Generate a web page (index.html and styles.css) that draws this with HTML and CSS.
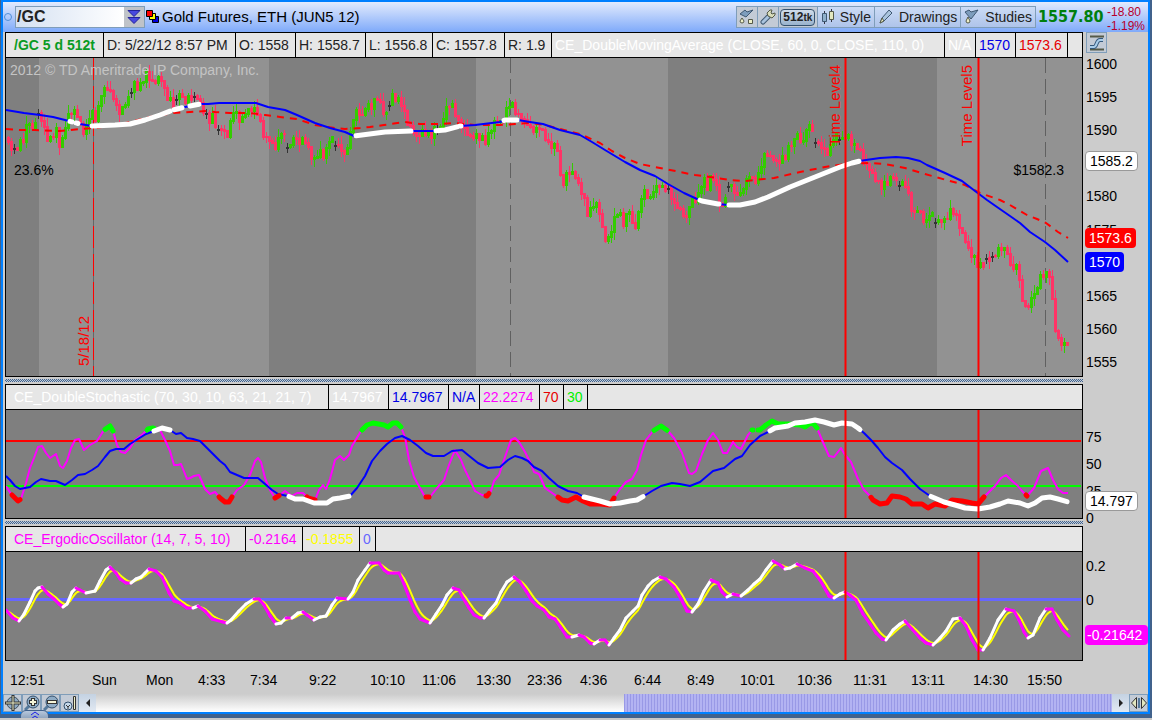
FILE: index.html
```
<!DOCTYPE html>
<html lang="en">
<head>
  <meta charset="UTF-8">
  <title>/GC Gold Futures</title>
  <meta name="viewport" content="width=device-width, initial-scale=1">
  <link rel="stylesheet" href="styles.css">
</head>
<body>
  <div class="frame">
    <div class="window">
      <header class="titlebar">
        <span class="link-dot"></span>
        <div class="symbol">
          <input type="text" value="/GC" aria-label="Symbol">
          <button aria-label="Symbol list">
            <svg width="14" height="16" viewBox="0 0 14 16"><path d="M1 1.500h12L7 7.500zM1 8.500h12l-6 6z" fill="#4848e0" stroke="#23239a" stroke-width="1"/></svg>
          </button>
        </div>
        <svg class="squares" width="14" height="14" viewBox="0 0 14 14" stroke="#000"><path d="M6.500 6.500h6v6h-6z" fill="#0000e0"/><path d="M3.500 3.500h6v6h-6z" fill="#ff0"/><path d="M.5.5h6v6h-6z" fill="#f00"/></svg>
        <h1>Gold Futures, ETH (JUN5 12)</h1>
        <div class="tools">
          <button class="square" aria-label="Flask">
            <svg width="16" height="16" viewBox="0 0 16 16"><path d="M1 5l5-4 2 2 6-2-7 7z" fill="#7d9dbd" stroke="#3f5872"/><path d="M3 9l2 3a2 2 0 1 1-4 0z" fill="#eef0c8" stroke="#555a48"/><path d="M9.500 10.500h4v4h-4z" fill="#eef0c8" stroke="#555a48"/></svg>
          </button>
          <button class="square" aria-label="Settings">
            <svg width="16" height="16" viewBox="0 0 16 16"><path d="M3 13l5-5" stroke="#3f5872" stroke-width="5" stroke-linecap="round"/><path d="M3 13l5-5" stroke="#a9c3dd" stroke-width="3" stroke-linecap="round"/><path d="M8 7L7 4l3-3 2 0-1 3 1 1 3-1v2l-3 3z" fill="#d8dcba" stroke="#555a48"/></svg>
          </button>
          <button class="tick"><span>512<small>tk</small></span></button>
          <button>
            <svg width="14" height="16" viewBox="0 0 14 16"><path d="M3.500 2v13M10.500 0v13" stroke="#334"/><path d="M1.500 4.500h4v8h-4z" fill="#8fb0cc" stroke="#3f5872"/><path d="M8.500 2.500h4v8h-4z" fill="#e3e8c0" stroke="#555a48"/></svg>
            Style
          </button>
          <button>
            <svg width="16" height="16" viewBox="0 0 16 16"><path d="M2 14l2-5 7-8 3 3-8 8z" fill="#a9c3dd" stroke="#3f5872"/><path d="M2 14l2-5 2 3z" fill="#eef0c8" stroke="#555a48"/></svg>
            Drawings
          </button>
          <button>
            <svg width="16" height="16" viewBox="0 0 16 16"><path d="M1 3l4-2 2 2 7-2-7 9z" fill="#7d9dbd" stroke="#3f5872"/><path d="M4 8l2 4a2 2 0 1 1-4 0z" fill="#eef0c8" stroke="#555a48"/></svg>
            Studies
          </button>
        </div>
        <strong class="last">1557.80</strong>
        <div class="change"><span>-18.80</span><span>-1.19%</span></div>
      </header>

      <main>
        <section class="panel">
          <div class="chart">
            <div class="legend price-legend">
              <b class="green">/GC 5 d 512t</b>
              <span>D: 5/22/12 8:57 PM</span>
              <span>O: 1558</span>
              <span>H: 1558.7</span>
              <span>L: 1556.8</span>
              <span>C: 1557.8</span>
              <span>R: 1.9</span>
              <span class="white">CE_DoubleMovingAverage (CLOSE, 60, 0, CLOSE, 110, 0)</span>
              <span class="white">N/A</span>
              <span class="blue">1570</span>
              <span class="red">1573.6</span>
            </div>
            <div class="plot price-plot">
              <svg id="price" viewBox="6 58 1076 318" preserveAspectRatio="none"></svg>
              <span class="note watermark">2012 © TD Ameritrade IP Company, Inc.</span>
              <span class="note fib">23.6%</span>
              <span class="note fib-price">$1582.3</span>
              <span class="note upright day">5/18/12</span>
              <span class="note upright level4">Time Level4</span>
              <span class="note upright level5">Time Level5</span>
            </div>
          </div>
          <aside class="axis price-axis">
            <button class="square scale" aria-label="Price axis settings">
              <svg width="16" height="16" viewBox="0 0 16 16"><path d="M1 1.500h14M1 14.500h14" stroke="#555a48" stroke-width="2"/><path d="M1 12h4c3 0 2-7 6-7h3" fill="none" stroke="#35597c" stroke-width="4"/><path d="M1 12h4c3 0 2-7 6-7h3" fill="none" stroke="#a9cdea" stroke-width="2"/></svg>
            </button>
            <ul>
              <li>1600</li><li>1595</li><li>1590</li><li></li><li>1580</li>
              <li>1575</li><li></li><li>1565</li><li>1560</li><li>1555</li>
            </ul>
            <span class="badge cursor">1585.2</span>
            <span class="badge slow">1573.6</span>
            <span class="badge fast">1570</span>
          </aside>
        </section>

        <div class="splitter"></div>

        <section class="panel">
          <div class="chart">
            <div class="legend stoch-legend">
              <span class="white">CE_DoubleStochastic (70, 30, 10, 63, 21, 21, 7)</span>
              <span class="white">14.7967</span>
              <span class="blue">14.7967</span>
              <span class="blue">N/A</span>
              <span class="magenta">22.2274</span>
              <span class="red">70</span>
              <span class="lime">30</span>
            </div>
            <div class="plot">
              <svg id="stochastic" viewBox="6 410 1076 108" preserveAspectRatio="none"></svg>
            </div>
          </div>
          <aside class="axis stoch-axis">
            <ul><li>75</li><li>50</li><li>25</li><li>0</li></ul>
            <span class="badge stoch">14.797</span>
          </aside>
        </section>

        <div class="splitter"></div>

        <section class="panel">
          <div class="chart">
            <div class="legend ergodic-legend">
              <span class="magenta">CE_ErgodicOscillator (14, 7, 5, 10)</span>
              <span class="magenta">-0.2164</span>
              <span class="yellow">-0.1855</span>
              <span class="violet">0</span>
            </div>
            <div class="plot">
              <svg id="ergodic" viewBox="6 552 1076 108" preserveAspectRatio="none"></svg>
            </div>
          </div>
          <aside class="axis ergodic-axis">
            <ul><li>0.2</li><li>0</li></ul>
            <span class="badge erg">-0.21642</span>
          </aside>
        </section>

        <div class="times">
          <span>12:51</span><span>Sun</span><span>Mon</span><span>4:33</span><span>7:34</span>
          <span>9:22</span><span>10:10</span><span>11:06</span><span>13:30</span><span>23:36</span>
          <span>4:36</span><span>6:44</span><span>8:49</span><span>10:01</span><span>10:36</span>
          <span>11:31</span><span>13:11</span><span>14:30</span><span>15:50</span>
        </div>
      </main>

      <footer>
        <button class="square" aria-label="Pan">
          <svg width="16" height="16" viewBox="0 0 16 16"><circle cx="8" cy="8" r="6" fill="#8eabc5" stroke="#3f4c55"/><path d="M8 0v16M0 8h16" stroke="#333" stroke-width="3"/><path d="M8 1v14M1 8h14" stroke="#eef0c8" stroke-width="1"/></svg>
        </button>
        <button class="square" aria-label="Zoom in">
          <svg width="16" height="16" viewBox="0 0 16 16"><path d="M1 15l4-4" stroke="#557a9c" stroke-width="3"/><circle cx="9" cy="7" r="6" fill="#8eabc5" stroke="#33506c"/><path d="M9 3v8M5 7h8" stroke="#333" stroke-width="4"/><path d="M9 4v6M6 7h6" stroke="#f5f5d8" stroke-width="2"/></svg>
        </button>
        <button class="square" aria-label="Zoom out">
          <svg width="16" height="16" viewBox="0 0 16 16"><path d="M1 15l4-4" stroke="#557a9c" stroke-width="3"/><circle cx="9" cy="7" r="6" fill="#8eabc5" stroke="#33506c"/><path d="M4 7h10" stroke="#333" stroke-width="4"/><path d="M5 7h8" stroke="#f5f5d8" stroke-width="2"/></svg>
        </button>
        <button class="square" aria-label="Right expansion">
          <svg width="16" height="16" viewBox="0 0 16 16"><circle cx="6" cy="11" r="4" fill="#c4d8ea" stroke="#33506c"/><path d="M4 10l2 2 2-2M6 12v2" stroke="#333" fill="none"/><path d="M11.500 1.500h2v13h-2z" fill="#eef0c8" stroke="#333"/></svg>
        </button>
        <button class="arrow" aria-label="Scroll left"><svg width="4" height="8" viewBox="0 0 4 8"><path d="M4 0v8L0 4z" fill="#222"/></svg></button>
        <div class="track"><div class="thumb"></div></div>
        <button class="arrow" aria-label="Scroll right"><svg width="4" height="8" viewBox="0 0 4 8"><path d="M0 0v8l4-4z" fill="#222"/></svg></button>
        <button class="square" aria-label="Fit">
          <svg width="16" height="16" viewBox="0 0 16 16"><path d="M5.500 2.500v11L.5 8zM10.500 2.500v11l5-5.500z" fill="#e3e8c0" stroke="#333"/><path d="M8 3v10" stroke="#557a9c" stroke-width="2"/></svg>
        </button>
      </footer>
    </div>
    <button class="drawer" aria-label="Open drawer">
      <svg width="10" height="8" viewBox="0 0 10 8"><path d="M1 4l4-3 4 3M1 8l4-3 4 3" fill="none" stroke="#1c1ce8" stroke-width="1"/></svg>
    </button>
  </div>
  <script src="chart.js"></script>
</body>
</html>
```
FILE: styles.css
```
:root {
  --frame-blue: #0080ff;
  --frame-dark: #41628c;
  --face: #cccccc;
  --legend: #e6e6e6;
  --plot: #7f7f7f;
  --button-edge: #7f9db9;
}

* { box-sizing: border-box; }

body {
  margin: 0;
  background: #c8c8c8;
  color: #000;
  font: 14px/16px "Liberation Sans", Arial, sans-serif;
}

.frame {
  position: relative;
  background: var(--frame-dark);
  padding: 0 2px 4px 1px;
}

.window {
  border: 2px solid var(--frame-blue);
  background: var(--face);
}

button {
  font: inherit;
  padding: 0;
  margin: 0;
  cursor: pointer;
}

svg { display: block; flex: none; }

/* title bar */
.titlebar {
  display: flex;
  align-items: center;
  height: 30px;
  background: linear-gradient(#e3ebfd, #7faafa);
}

.link-dot {
  width: 8px;
  height: 8px;
  margin: 0 3px 0 1px;
  border: 1px solid #4f8fd8;
  border-radius: 50%;
}

.symbol {
  display: flex;
  width: 130px;
  height: 22px;
  border: 1px solid var(--button-edge);
}

.symbol input {
  flex: 1;
  min-width: 0;
  border: 0;
  padding: 0 1px;
  background: linear-gradient(90deg, #d5e1f2, #fff);
  color: #222;
  font: bold 16px/20px "Liberation Sans", Arial, sans-serif;
}

.symbol button {
  display: flex;
  align-items: center;
  justify-content: center;
  width: 20px;
  border: 0;
  background: #bfc3c8;
}

.squares { margin: 0 2px 0 1px; }

h1 {
  margin: 0;
  flex: 1;
  font-size: 15px;
  font-weight: normal;
  white-space: nowrap;
}

.tools { display: flex; }

.tools button,
.square {
  display: flex;
  align-items: center;
  justify-content: center;
  height: 22px;
  border: 1px solid var(--button-edge);
  background: #c3cbd6;
  color: #222;
}

.tools button {
  gap: 5px;
  padding: 0 3px;
  margin-left: -1px;
  background: linear-gradient(#cbdbf5, #afc4ea);
}

.tools .square { width: 22px; background: #c3cbd6; }

.tools .tick { width: 40px; background: #c3cbd6; }

.tick span {
  border: 1px solid #36526e;
  border-radius: 4px;
  padding: 0 2px;
  background: linear-gradient(#cfdcea, #9ab3cd);
  font: bold 12px/14px "Liberation Sans", Arial, sans-serif;
}

.tick small { font-size: 10px; }

.last {
  width: 69px;
  padding-left: 2px;
  color: #007f0e;
  font: bold 16px/20px "DejaVu Sans Condensed", "Open Sans", sans-serif;
}

.change {
  display: flex;
  flex-direction: column;
  width: 43px;
  padding: 3px 0 0 2px;
  color: #b8002c;
  font-size: 12px;
  line-height: 14px;
}

/* panels */
main { padding-left: 2px; }

.panel {
  display: grid;
  grid-template-columns: 1fr 65px;
}

.chart {
  min-width: 0;
  border: 1px solid #000;
}

.legend {
  display: grid;
  height: 25px;
  border-bottom: 1px solid #000;
  background: var(--legend);
  color: #222;
  line-height: 24px;
  white-space: nowrap;
}

.legend > * {
  padding-left: 3px;
  border-right: 1px solid #000;
  overflow: hidden;
}

.legend > :first-child { padding-left: 8px; }

.price-legend { grid-template-columns: 98px 132px 60px 70px 67px 72px 47px 393px 31px 40px 52px; }
.stoch-legend { grid-template-columns: 323px 60px 60px 31px 60px 24px 24px; }
.ergodic-legend { grid-template-columns: 240px 57px 57px 16px; }

.legend .green { color: #0a9b24; }
.legend .white { color: #fff; }
.legend .blue { color: #0000e6; }
.legend .red { color: #e60000; }
.legend .magenta { color: #f0f; }
.legend .lime { color: #00f000; }
.legend .yellow { color: #ff0; }
.legend .violet { color: #66f; }

.plot {
  position: relative;
  height: 108px;
  background: var(--plot);
}

.price-plot { height: 318px; }

.plot svg {
  width: 100%;
  height: 100%;
}

.splitter {
  height: 7px;
  margin-right: 65px;
  border: solid var(--face);
  border-width: 2px 0;
  background: repeating-conic-gradient(#41628c 0 25%, #c0cbd8 0 50%) 0 0 / 2px 2px;
}

/* text drawn over the price plot */
.note {
  position: absolute;
  white-space: nowrap;
}

.watermark { left: 4px; top: 4px; color: #c4c4c4; }
.fib { left: 8px; top: 104px; }
.fib-price { right: 18px; top: 104px; }

.upright {
  writing-mode: vertical-rl;
  transform: rotate(180deg);
  color: #f00;
  font-size: 15px;
}

.day { left: 6.5%; bottom: 10px; }
.level4 { left: 76.3%; top: 7px; }
.level5 { left: 88.6%; top: 7px; }

/* value axes */
.axis {
  position: relative;
  padding-left: 3px;
}

.axis ul {
  display: flex;
  flex-direction: column;
  justify-content: space-between;
  margin: 0;
  padding: 0;
  list-style: none;
}

.axis li { height: 16px; }

.price-axis ul { height: 314px; margin-top: 3px; }
.stoch-axis ul { height: 97px; margin-top: 45px; }
.ergodic-axis ul { height: 50px; margin-top: 32px; }
.stoch-axis, .ergodic-axis { height: 135px; }

.scale { width: 21px; height: 21px; }

.badge {
  position: absolute;
  left: 2px;
  padding: 0 4px;
  border-radius: 4px;
  color: #fff;
  line-height: 20px;
}

.cursor, .stoch {
  background: #fff;
  color: #000;
  border: 1px solid #999;
  line-height: 18px;
}

.cursor { top: 119px; }
.slow { top: 196px; background: #f00; }
.fast { top: 220px; background: #00f; }
.stoch { top: 107px; }
.erg { top: 99px; right: 0; padding: 0 2px; background: #f0f; }

/* time axis */
.times {
  display: grid;
  grid-template-columns: 82fr 54fr 52fr 52fr 59fr 61fr 52fr 54fr 51fr 53fr 54fr 53fr 53fr 57fr 56fr 58fr 62fr 54fr 55fr;
  height: 33px;
  padding-left: 5px;
  margin-right: 66px;
  line-height: 38px;
}

/* scroll bar */
footer {
  display: flex;
  height: 18px;
}

footer .square { width: 19px; height: 18px; }

.arrow {
  display: flex;
  align-items: center;
  justify-content: center;
  width: 17px;
  border: 0;
  background: linear-gradient(#c4d2e2, #e2e9f2);
}

.track {
  flex: 1;
  display: flex;
  justify-content: flex-end;
  background: linear-gradient(#ccc, #fff);
}

.thumb {
  width: 48%;
  background: repeating-linear-gradient(90deg, #9999e6 0 1px, #b3b3f2 1px 3px);
}

.drawer {
  position: absolute;
  left: 20px;
  bottom: -2px;
  display: flex;
  align-items: center;
  justify-content: center;
  width: 29px;
  height: 10px;
  border: 1px solid #41628c;
  border-radius: 6px 6px 0 0;
  background: linear-gradient(#b8c8dc, #8aa0ba);
}
```
FILE: chart.js
```
const BLUE = "#0000ff", RED = "#ff0000", GREEN = "#00ff00", MAGENTA = "#ff00ff";

// "x,y x,y ..." -> [[x, y], ...]
const parse = (s) => s.trim().split(/\s+/).map((p) => p.split(",").map(Number));

const close = parse(`7,140 10,145 13,152 17,153 20,145 23,138 26,124 29,122 32,128 37,115 41,124 46,138 49,135 52,137
  56,128 60,149 64,135 68,119 71,110 75,109 80,124 84,133 88,126 91,113 94,121 98,105 102,90 106,85 109,92 112,100
  117,112 121,107 126,102 130,92 133,84 138,95 143,78 146,71 151,82 156,79 162,85 165,97 169,94 173,106 177,96
  180,88 183,108 187,103 191,96 195,94 198,98 202,107 208,122 210,130 213,114 216,128 220,127 227,134 233,116
  240,118 245,112 250,107 256,115 262,132 268,138 275,146 282,136 289,146 293,136 297,140 303,142 309,154
  315,158 320,150 324,157 330,143 336,140 344,154 350,136 354,119 358,110 362,114 367,103 371,106 376,101
  380,107 386,112 392,94 398,102 405,118 412,128 415,137 420,132 425,138 430,136 434,126 440,127 444,112
  448,110 454,109 460,124 466,130 471,142 478,138 481,132 485,142 489,130 495,124 500,126 506,107 512,103
  518,118 524,125 528,120 532,131 536,128 540,125 543,138 547,148 551,144 556,142 559,163 561,187 564,180
  567,175 571,178 576,173 580,190 585,200 587,213 594,210 597,207 600,212 604,240 609,236 613,222
  617,218 619,215 622,225 627,210 630,210 633,230 637,220 641,202 645,192 650,196 654,188 659,184 664,194
  670,192 674,202 679,208 683,213 686,221 689,210 694,200 699,190 704,178 707,187 711,178 716,190 721,207
  724,200 727,188 732,180 734,197 740,198 744,181 748,174 753,179 757,180 762,167 766,151 771,156 776,161
  781,160 786,162 789,145 794,138 797,132 800,142 805,136 809,128 812,136 816,138 820,145 825,150 828,153
  833,143 838,135 843,137 848,135 853,147 858,153 864,160 870,170 875,178 881,192 886,183 891,174 896,180
  900,183 905,190 909,201 913,213 916,208 921,213 925,225 930,218 935,218 940,220 945,219 949,212 954,218
  959,224 963,235 968,248 974,260 976,270 980,268 986,257 990,260 993,254 997,251 1003,254 1007,250
  1011,269 1016,265 1019,277 1022,305 1028,312 1031,294 1036,292 1039,275 1044,274 1049,280 1051,305
  1053,302 1055,327 1058,337 1062,345 1065,342 1069,342`);

const fastMA = parse(`6,110 24,113 40,115 53,117 65,120 80,124 92,126 115,125 130,124 145,120 160,115 173,110 185,107
  200,104 208,104 219,103 256,103 268,107 285,110 297,115 315,123 330,128 345,132 354,136 385,132 411,131 434,131
  445,130 460,126 475,125 500,122 505,120 518,120 530,122 543,124 560,130 580,135 592,142 605,150 625,162 640,170
  655,176 668,184 684,193 697,199 702,201 718,204 728,205 740,205 755,202 768,197 790,187 815,177 840,167 852,163
  860,161 866,160 880,158 896,157 908,158 920,161 927,165 945,173 962,181 975,191 987,200 997,207 1010,216
  1020,223 1030,232 1045,242 1055,250 1068,262`);

const slowMA = parse(`6,129 20,130 35,130 60,131 80,129 95,128 110,126 130,122 150,117 173,113 190,112 205,111 215,112
  230,113 250,113 265,115 280,117 297,119 315,125 335,128 345,129 360,128 370,127 384,125 405,122 420,124 440,124
  455,123 475,125 500,125 515,124 530,123 545,125 560,129 580,134 600,143 612,151 625,158 640,164 660,168 680,172
  695,175 710,177 730,180 745,181 755,180 774,178 800,172 825,167 845,164 870,163 885,164 905,168 925,174 950,181
  965,185 980,193 1000,200 1010,205 1027,215 1037,219 1046,223 1058,232 1068,238`);

const fastK = parse(`6,486 11,494 18,501 21,499 26,483 30,468 34,458 38,447 42,446 46,453 50,458 56,454 60,466 63,468
  67,461 71,448 75,440 79,439 84,450 90,445 97,441 104,430 110,426 113,431 117,445 121,452 125,453 130,448
  135,440 143,434 148,429 153,428 160,430 165,440 170,451 174,465 178,465 181,464 187,479 190,478 194,476 199,475
  205,489 210,494 215,492 220,498 225,502 229,502 232,497 237,490 244,485 250,475 255,461 258,458 261,462 265,478
  270,490 275,498 280,495 285,491 292,496 297,493 303,493 308,498 315,500 319,490 323,485 326,489 330,479 335,460
  340,456 344,460 349,455 352,446 358,436 361,431 367,425 373,423 384,425 388,427 393,423 397,423 401,427 405,437
  409,460 414,477 420,488 425,497 430,497 437,488 444,480 449,465 455,450 461,460 465,470 470,480 475,491 482,495
  487,496 491,491 494,481 499,475 505,457 511,440 515,438 519,442 525,452 531,464 534,472 539,474 545,488 555,495
  562,500 568,501 576,497 583,501 590,504 600,504 610,505 614,498 620,489 626,482 632,479 637,470 641,455 646,440
  653,431 661,426 668,431 674,438 682,453 689,473 692,474 696,471 702,454 708,440 713,433 718,440 723,453 727,453
  733,442 737,447 741,449 748,435 752,430 760,430 766,425 772,421 778,424 788,424 800,425 805,427 812,422 817,428
  822,440 829,456 834,457 841,448 845,455 851,462 858,479 864,490 870,496 873,500 880,504 887,503 892,496 900,497
  906,499 912,504 922,504 928,508 935,504 945,506 952,500 962,501 972,503 978,504 984,497 990,491 995,486 1001,478
  1006,475 1011,480 1018,486 1022,491 1027,496 1034,488 1041,471 1048,468 1053,480 1058,489 1063,493 1068,493`);

const slowD = parse(`6,476 10,480 15,486 20,489 30,487 36,482 41,479 50,481 56,481 65,485 72,480 78,475 85,474 92,470
  98,466 105,457 110,451 116,449 124,449 130,444 138,439 146,434 154,431 162,428 170,430 176,434 181,433 187,438
  193,439 200,441 205,446 213,454 220,461 225,465 230,472 237,475 244,478 258,478 265,484 272,490 278,494 288,496
  295,499 303,499 314,503 327,503 333,499 340,498 350,496 357,488 365,476 372,461 380,451 387,444 395,438 402,436
  410,440 418,446 426,453 433,456 444,456 452,451 462,450 468,455 478,463 488,468 500,467 508,460 515,456 522,458
  528,461 534,467 542,471 549,478 558,486 568,491 577,493 584,497 592,499 600,501 610,504 620,503 630,501 637,500
  644,496 652,491 661,486 672,483 680,484 690,486 700,482 713,471 724,468 735,459 742,456 750,445 760,436 768,432
  775,428 788,426 795,423 805,422 815,420 824,422 834,425 842,423 852,424 858,428 864,433 871,440 878,448 885,457
  892,463 902,470 910,479 920,489 930,496 937,499 944,502 955,505 965,508 978,509 990,507 1000,504 1008,501
  1020,503 1028,506 1035,503 1042,498 1050,497 1058,499 1068,502`);

const ergo = parse(`6,610 13,618 19,621 24,614 30,602 35,591 38,588 42,587 48,594 54,599 59,604 63,607 67,604 72,592
  76,588 80,590 86,593 95,591 100,581 106,570 110,567 116,573 120,579 126,583 131,583 136,579 141,577 145,573
  149,569 156,571 162,577 169,593 174,601 180,603 187,608 193,608 198,606 205,611 212,619 223,622 227,623 231,620
  239,611 246,604 254,599 259,599 264,605 270,616 276,624 281,623 286,618 292,618 298,613 303,612 307,615 314,620
  320,617 326,616 332,605 337,598 348,599 353,592 358,580 365,570 370,563 379,563 384,570 388,573 394,573 399,573
  404,584 410,600 415,612 420,619 430,623 436,614 442,605 447,595 453,588 459,590 463,598 469,608 474,615 480,618
  484,618 490,610 496,603 501,592 507,582 514,577 520,582 526,591 532,601 537,606 544,610 549,617 555,619 561,628
  567,637 572,637 579,635 584,637 590,643 594,644 600,640 605,640 609,645 614,638 620,630 626,618 633,611 638,606
  642,595 648,586 653,581 660,577 666,579 674,587 681,599 687,611 692,612 698,604 704,591 711,580 718,583 722,592
  727,597 733,594 741,596 748,590 754,584 760,579 766,570 773,561 780,565 785,569 790,568 797,564 805,568 813,571
  820,580 829,596 834,598 840,594 845,592 850,595 856,600 863,614 870,624 876,633 882,639 886,640 893,630 900,624
  905,621 912,629 920,638 926,643 933,645 940,638 946,631 953,619 960,618 966,626 972,640 978,650 983,650 990,638
  998,620 1006,609 1014,611 1019,620 1024,632 1028,638 1033,635 1040,618 1046,609 1052,609 1057,620 1063,630
  1069,636`);

function valueAt(points, x) {
  for (let i = 1; i < points.length; i++) {
    const [x0, y0] = points[i - 1];
    const [x1, y1] = points[i];
    if (x <= x1) return y0 + (y1 - y0) * (x - x0) / (x1 - x0);
  }
  return points[points.length - 1][1];
}

function slice(points, from, to) {
  return [
    [from, valueAt(points, from)],
    ...points.filter(([x]) => x > from && x < to),
    [to, valueAt(points, to)]
  ];
}

function rect(x, y, w, h, fill) {
  return `<rect x="${x}" y="${y}" width="${w}" height="${h}" fill="${fill}"/>`;
}

function line(points, color, width, extra = "") {
  return `<polyline points="${points.join(" ")}" fill="none" stroke="${color}" stroke-width="${width}" stroke-linejoin="round" ${extra}/>`;
}

function thick(points, ranges, color) {
  return ranges.map(([a, b]) => line(slice(points, a, b), color, 5, 'stroke-linecap="round"')).join("");
}

function vertical(x, y0, y1, color, width) {
  return `<line x1="${x}" x2="${x}" y1="${y0}" y2="${y1}" stroke="${color}" stroke-width="${width}"/>`;
}

function dashed(x, y0, y1, color, on, off) {
  let out = "";
  for (let y = y0; y < y1; y += on + off) {
    out += rect(x, y, 1, Math.min(on, y1 - y), color);
  }
  return out;
}

function timeLevels(y0, y1) {
  return vertical(845.5, y0, y1, RED, 2) + vertical(978.5, y0, y1, RED, 2);
}

function drawCandles() {
  const dojis = [13, 37, 130, 177, 193, 205, 218, 286, 335, 389, 437, 667, 728, 816, 840, 899, 935, 987, 992];
  let out = "";
  let open = 138;
  let n = 0;
  for (let x = 8; x < 1070; x += 3) {
    const wobble = [0, 4, -4, 2, -5, 3, 1, -3][(n * 5) % 8];
    const end = Math.round(valueAt(close, x) + wobble);
    const top = Math.min(open, end) - 1;
    const size = Math.max(Math.abs(open - end) + 2, 2);
    const up = [1, 6, 0, 3, 8, 2, 4][(n * 3) % 7];
    const down = [2, 0, 5, 1, 7][(n * 2) % 5];
    const doji = dojis.some((d) => Math.abs(d - x) < 2);
    const color = doji ? "#333" : end < open ? "#33cc00" : "#ff3366";
    out += doji ? rect(x, end - 4, 1, 10, color) : rect(x, top - up, 1, size + up + down, color);
    out += doji ? rect(x - 1, end, 3, 2, color) : rect(x - 1, top, 3, size, color);
    open = end;
    n++;
  }
  return out;
}

function drawPrice() {
  const light = "#929292";
  let out = rect(39, 58, 230, 318, light) + rect(476, 58, 192, 318, light) + rect(937, 58, 145, 318, light);
  out += dashed(93, 58, 376, "#666", 318, 0) + dashed(93, 58, 376, RED, 22, 6);
  out += dashed(510, 58, 376, "#606060", 15, 6) + dashed(1045, 58, 376, "#606060", 15, 6);
  out += drawCandles();
  out += line(slowMA, RED, 2, 'stroke-dasharray="7 6"');
  out += line(fastMA, BLUE, 2);
  out += thick(fastMA, [[70, 72], [76, 78], [92, 170], [174, 182], [190, 199], [356, 411], [436, 457], [460, 461],
    [504, 517], [700, 719], [729, 859]], "#fff");
  out += timeLevels(58, 376);
  document.getElementById("price").innerHTML = out;
}

function drawStochastic() {
  let out = rect(6, 440, 1075, 2, RED) + rect(6, 485, 1075, 2, GREEN);
  out += line(fastK, MAGENTA, 2) + line(slowD, BLUE, 2);
  out += thick(fastK, [[105, 113], [147, 154], [362, 401], [654, 667], [752, 753], [758, 817]], GREEN);
  out += thick(fastK, [[12, 20], [219, 232], [275, 279], [307, 315], [426, 429], [486, 489], [558, 614], [871, 984],
    [1026, 1027]], RED);
  out += thick(slowD, [[154, 170], [289, 349], [584, 643], [770, 860], [931, 1067]], "#fff");
  out += timeLevels(410, 518);
  document.getElementById("stochastic").innerHTML = out;
}

function drawErgodic() {
  let out = rect(6, 598, 1075, 3, "#6666ff");
  const signal = [];
  let ema = 612;
  for (let x = 6; x <= 1068; x += 2) {
    ema += (valueAt(ergo, x) - ema) * 0.33;
    signal.push([x, ema]);
  }
  out += line(signal, "#ffff00", 2);
  for (let i = 1; i < ergo.length; i++) {
    const rising = ergo[i][1] < ergo[i - 1][1];
    out += line([ergo[i - 1], ergo[i]], rising ? "#fff" : MAGENTA, 3, 'stroke-linecap="round"');
  }
  out += timeLevels(552, 660);
  document.getElementById("ergodic").innerHTML = out;
}

drawPrice();
drawStochastic();
drawErgodic();
```
